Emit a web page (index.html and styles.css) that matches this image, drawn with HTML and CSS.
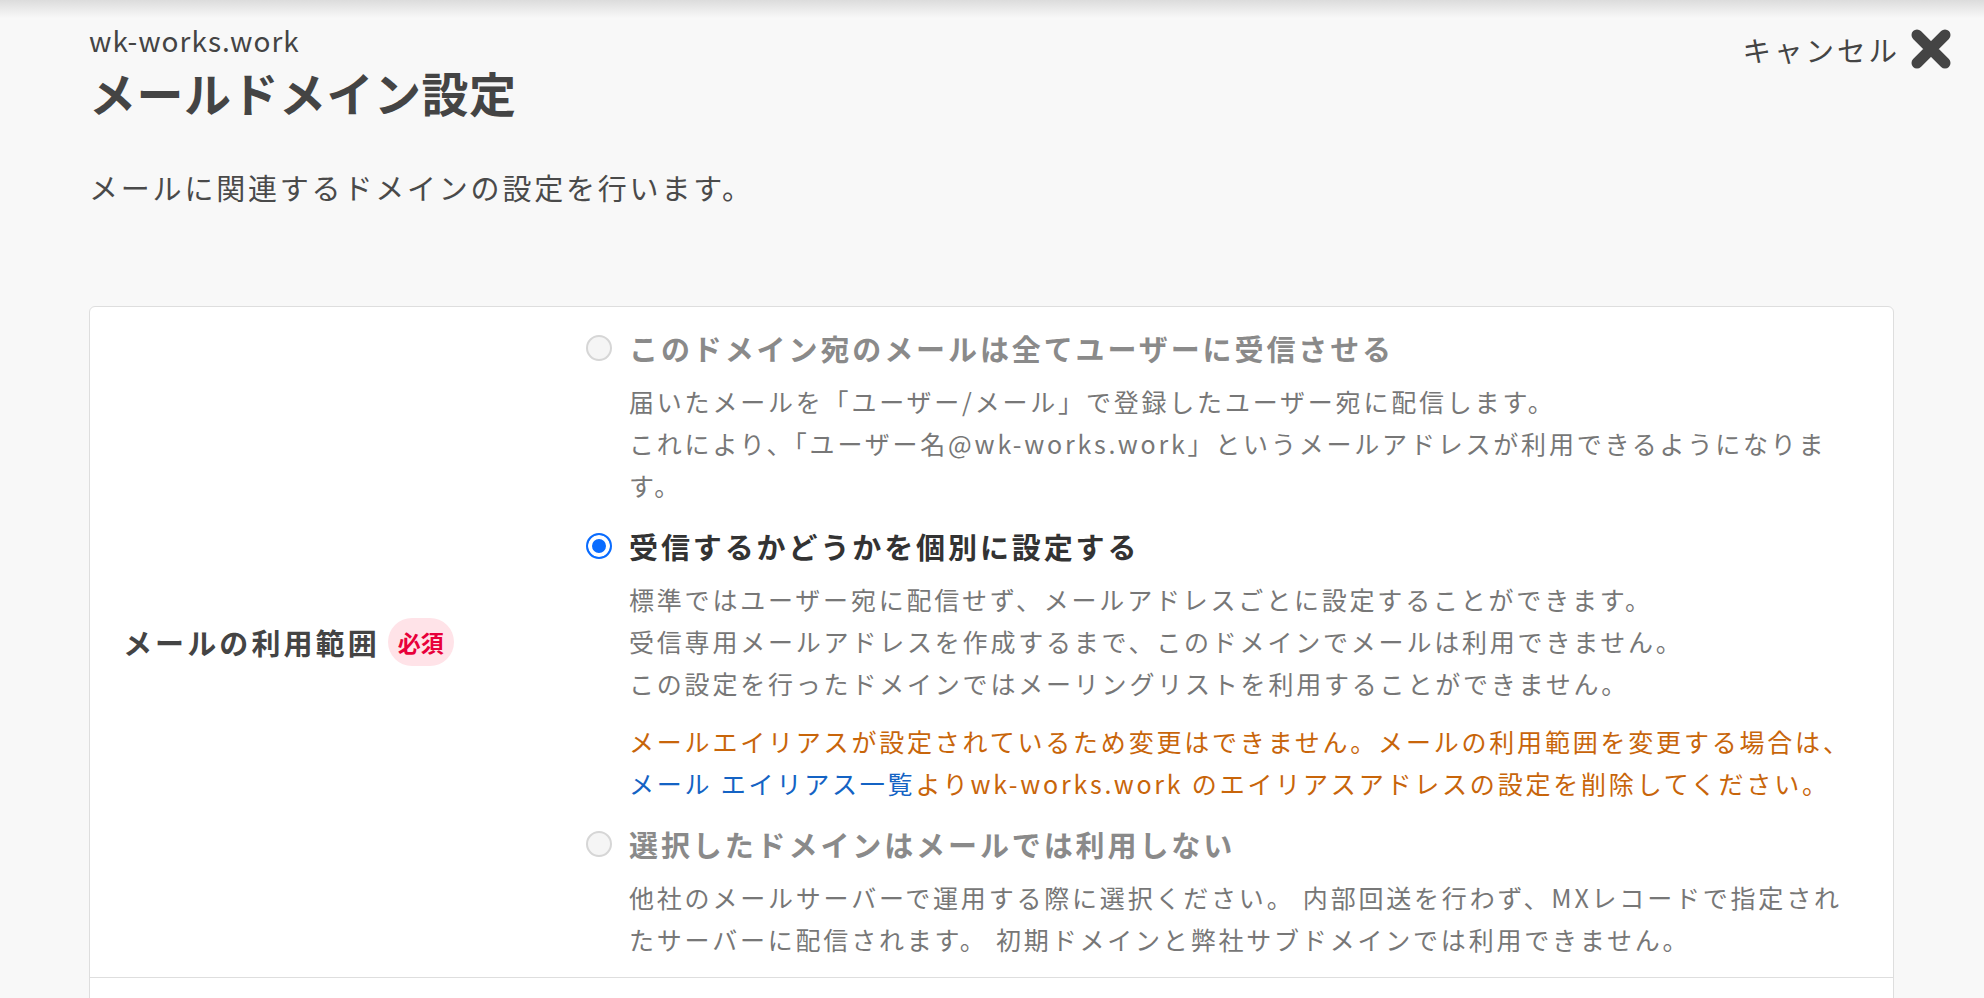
FILE: index.html
```html
<!DOCTYPE html>
<html lang="ja">
<head>
    <meta charset="UTF-8">
    <meta name="viewport" content="width=device-width, initial-scale=1.0">
    <title>メールドメイン設定</title>
    <link rel="stylesheet" href="styles.css">
</head>
<body>
    <header class="page-header">
        <div class="titles">
            <p class="domain">wk-works.work</p>
            <h1>メールドメイン設定</h1>
        </div>
        <a href="#" class="cancel">
            <span>キャンセル</span>
            <svg width="42" height="42" viewBox="0 0 42 42" aria-hidden="true">
                <path d="M7 7 L35 35 M35 7 L7 35" stroke="#444" stroke-width="11" stroke-linecap="round" fill="none"/>
            </svg>
        </a>
    </header>

    <p class="intro">メールに関連するドメインの設定を行います。</p>

    <section class="card">
        <div class="row">
            <div class="row-label">
                メールの利用範囲<span class="badge">必須</span>
            </div>
            <div class="row-body">
                <label class="option disabled">
                    <input type="radio" name="scope" disabled>
                    <span class="option-title">このドメイン宛のメールは全てユーザーに受信させる</span>
                </label>
                <p class="option-desc">届いたメールを「ユーザー/メール」で登録したユーザー宛に配信します。<br>これにより、「ユーザー名@wk-works.work」というメールアドレスが利用できるようになりま<br>す。</p>

                <label class="option">
                    <input type="radio" name="scope" checked>
                    <span class="option-title">受信するかどうかを個別に設定する</span>
                </label>
                <p class="option-desc">標準ではユーザー宛に配信せず、メールアドレスごとに設定することができます。<br>受信専用メールアドレスを作成するまで、このドメインでメールは利用できません。<br>この設定を行ったドメインではメーリングリストを利用することができません。</p>
                <p class="option-warning">メールエイリアスが設定されているため変更はできません。メールの利用範囲を変更する場合は、<br><a href="#">メール エイリアス一覧</a>よりwk-works.work のエイリアスアドレスの設定を削除してください。</p>

                <label class="option disabled">
                    <input type="radio" name="scope" disabled>
                    <span class="option-title">選択したドメインはメールでは利用しない</span>
                </label>
                <p class="option-desc">他社のメールサーバーで運用する際に選択ください。 内部回送を行わず、MXレコードで指定され<br>たサーバーに配信されます。 初期ドメインと弊社サブドメインでは利用できません。</p>
            </div>
        </div>
        <div class="row row-next"></div>
    </section>
</body>
</html>
```

FILE: styles.css
```css
body {
    margin: 0;
    padding: 0;
    background: #f8f8f8 linear-gradient(#dcdcdc 0, #f8f8f8 18px) no-repeat;
    font-family: "Noto Sans CJK JP", "Noto Sans", sans-serif;
    color: #444;
    overflow: hidden;
}
.page-header {
    display: flex;
    justify-content: space-between;
    align-items: flex-start;
    padding: 22px 32px 0 89px;
}
.domain {
    margin: 0;
    font-size: 28px;
    line-height: 36px;
    letter-spacing: 1px;
    color: #444;
}
h1 {
    margin: 4px 0 0;
    font-size: 47px;
    line-height: 60px;
    letter-spacing: 0.5px;
    font-weight: bold;
    color: #444;
}
.cancel {
    display: flex;
    align-items: center;
    gap: 10px;
    margin-top: 6px;
    color: #444;
    text-decoration: none;
    font-size: 28.5px;
    letter-spacing: 3px;
}
.intro {
    margin: 45px 0 0 89px;
    font-size: 29px;
    line-height: 40px;
    letter-spacing: 2.8px;
    color: #4a4a4a;
}
.card {
    margin: 99px 90px 0 89px;
    background-color: #fff;
    border: 1px solid #dedede;
    border-radius: 6px;
}
.row {
    display: grid;
    grid-template-columns: 496px 1fr;
    border-bottom: 1px solid #dedede;
}
.row-next {
    border-bottom: none;
    height: 120px;
}
.row-label {
    display: flex;
    align-items: center;
    padding-left: 33px;
    font-size: 29px;
    font-weight: bold;
    letter-spacing: 3.1px;
    color: #444;
}
.badge {
    display: inline-block;
    margin-left: 8px;
    padding: 0 10px;
    height: 48px;
    line-height: 48px;
    border-radius: 24px;
    background-color: #ffe3e8;
    color: #e8003a;
    font-size: 23px;
    letter-spacing: 0;
}
.row-body {
    padding: 21px 20px 17px 0;
}
.option {
    display: flex;
    align-items: center;
    gap: 17px;
    height: 40px;
    margin-top: 20px;
}
.option:first-child {
    margin-top: 0;
}
.option input[type="radio"] {
    appearance: none;
    -webkit-appearance: none;
    margin: 0;
    width: 26px;
    height: 26px;
    border-radius: 50%;
    border: 2px solid #d6d6d6;
    background-color: #f5f5f5;
    flex-shrink: 0;
}
.option input[type="radio"]:checked {
    border: 2px solid #0a6cff;
    background-color: #0a6cff;
    box-shadow: inset 0 0 0 4px #fff;
}
.option-title {
    font-size: 29px;
    font-weight: bold;
    letter-spacing: 2.9px;
    color: #333;
}
.option.disabled .option-title {
    color: #8a8a8a;
}
.option-desc {
    margin: 12px 0 0 43px;
    font-size: 25px;
    line-height: 42px;
    letter-spacing: 2.8px;
    color: #777;
}
.option-warning {
    margin: 16px 0 0 43px;
    font-size: 25px;
    line-height: 42px;
    letter-spacing: 2.8px;
    color: #c8650a;
}
.option-warning a {
    color: #1463c4;
    text-decoration: none;
}
```
